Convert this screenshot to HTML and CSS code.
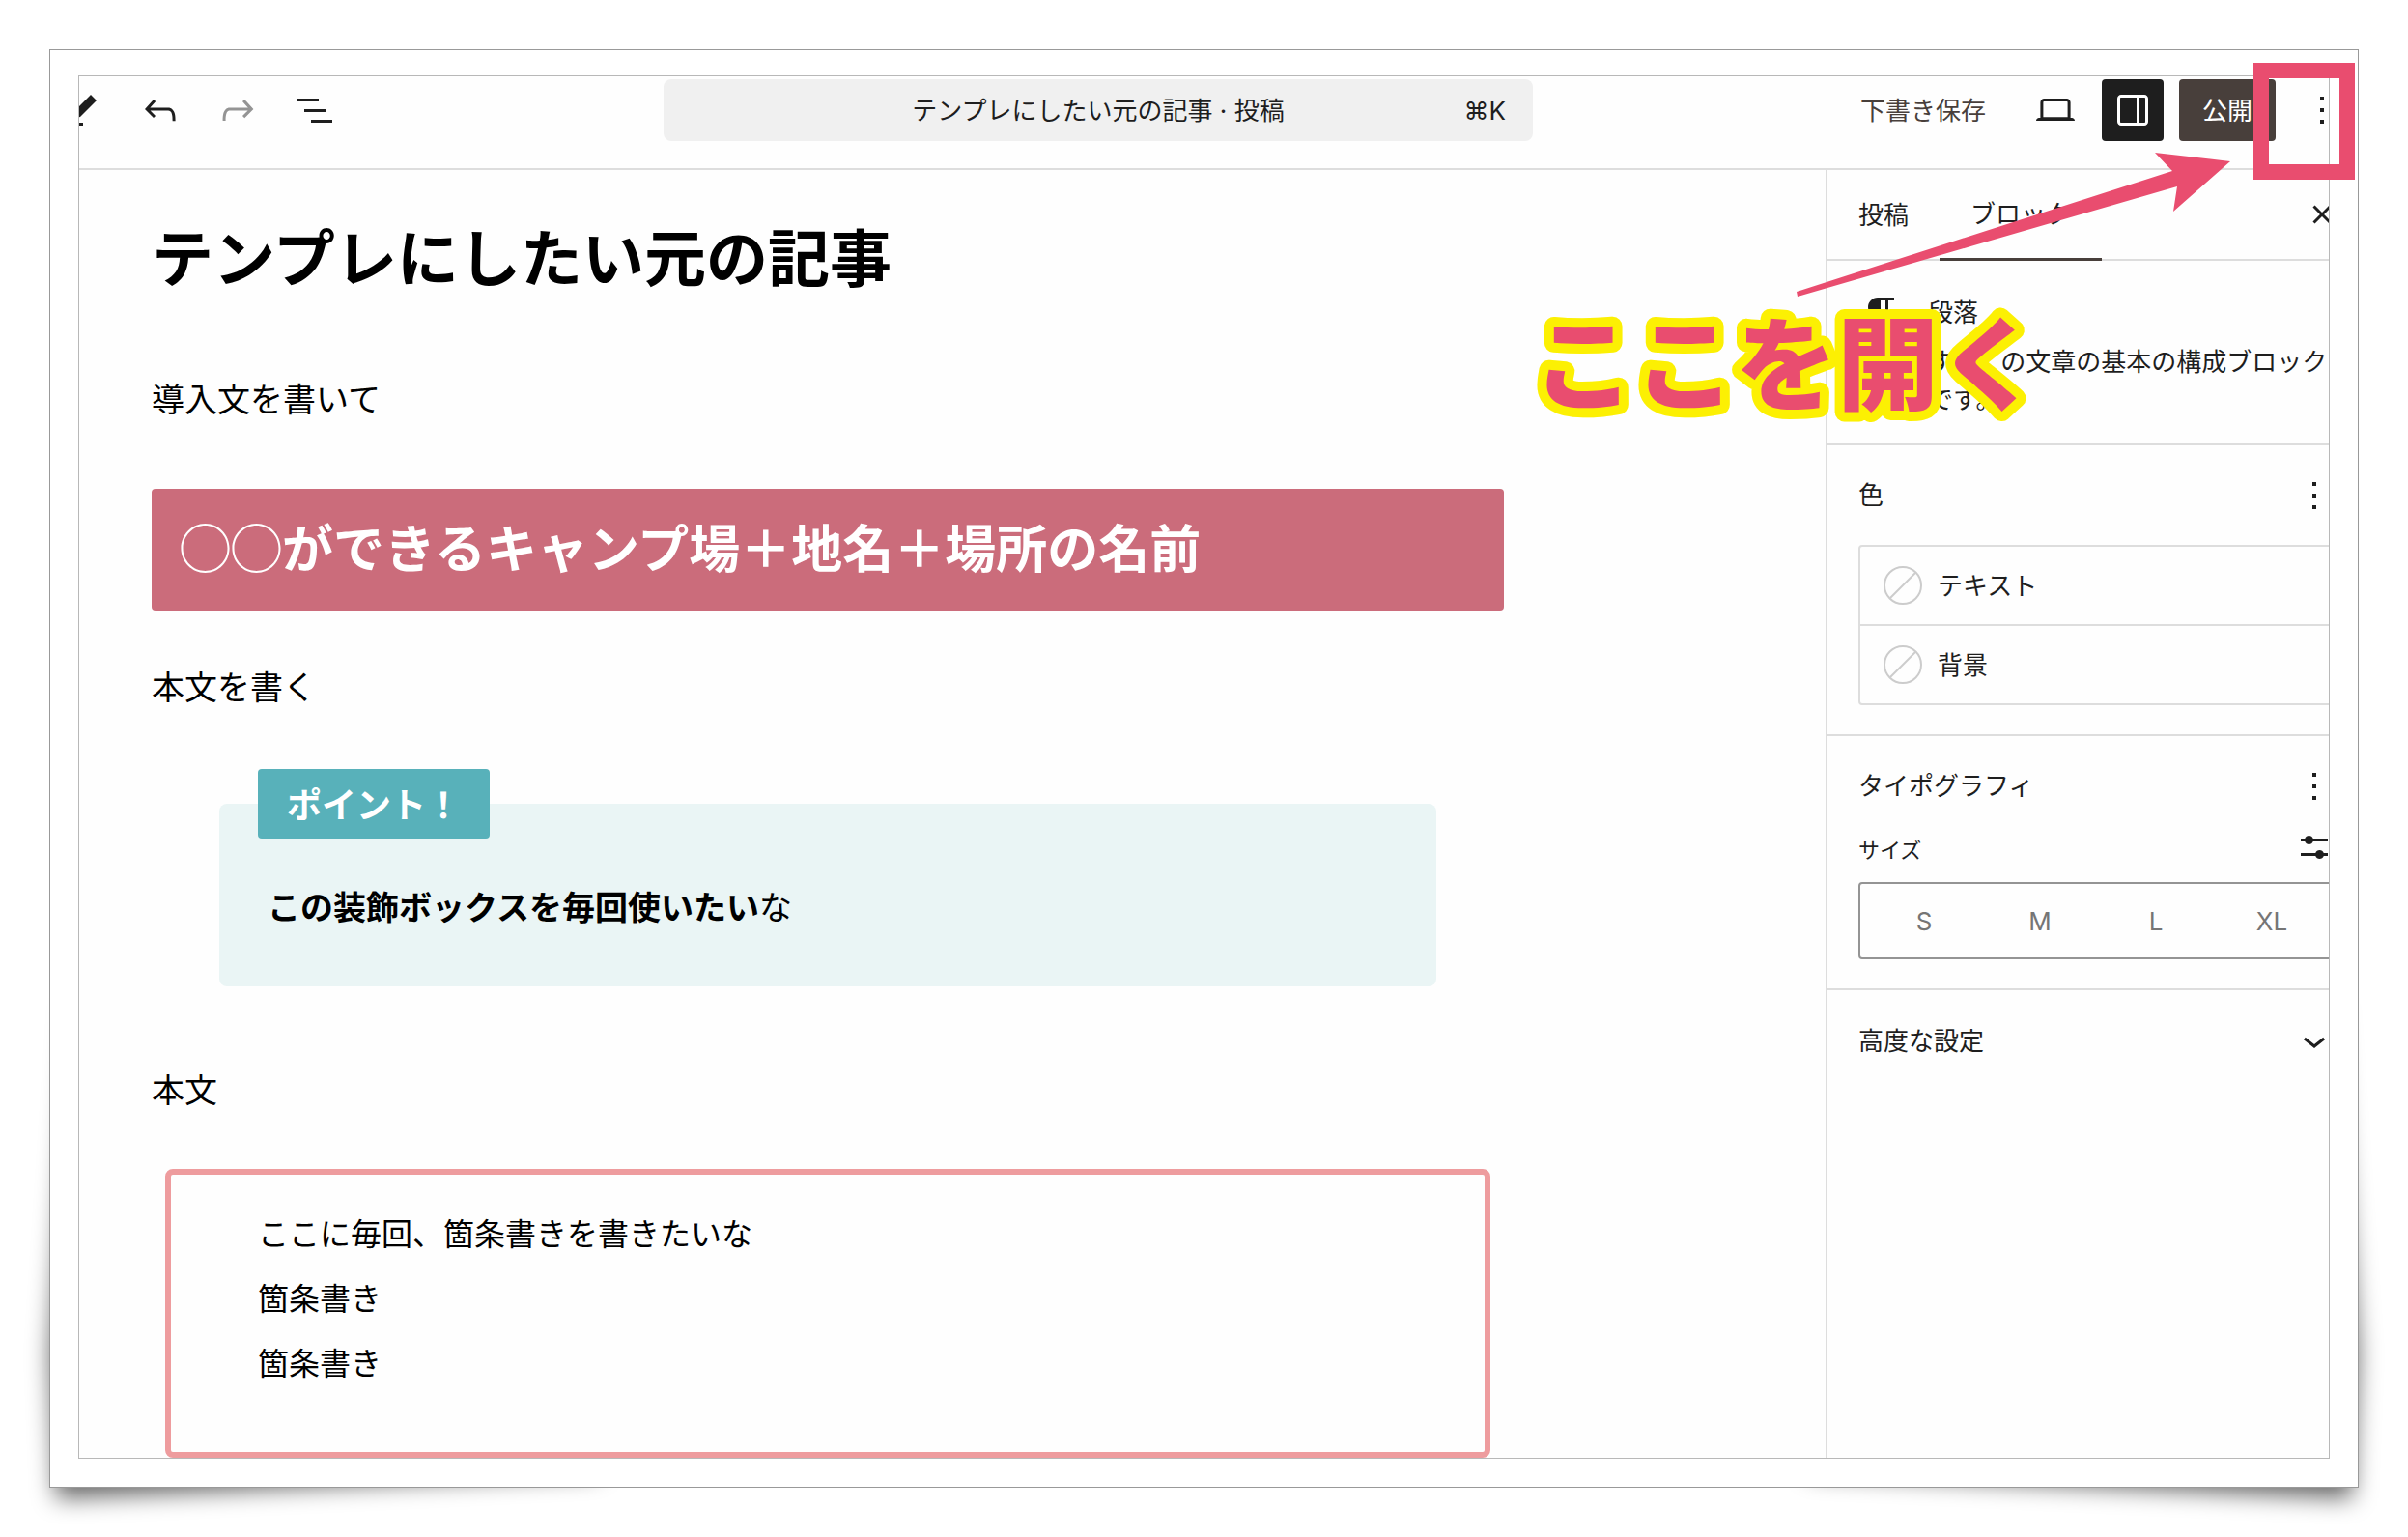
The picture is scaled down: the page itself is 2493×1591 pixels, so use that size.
FILE: index.html
```html
<!DOCTYPE html>
<html lang="ja">
<head>
<meta charset="utf-8">
<meta name="viewport" content="width=device-width, initial-scale=1">
<title>テンプレにしたい元の記事 · 投稿</title>
<link rel="stylesheet" href="styles.css">
</head>
<body>
<div class="photo">
  <svg class="lift" viewBox="0 0 700 640" aria-hidden="true"><defs><filter id="soft" x="-20%" y="-20%" width="140%" height="140%"><feGaussianBlur stdDeviation="12"/></filter></defs><path d="M76 90L52 450L58 600L620 574L620 500L90 90Z" filter="url(#soft)"/></svg>
  <svg class="lift lift-right" viewBox="0 0 700 640" aria-hidden="true"><path d="M76 90L52 450L58 600L620 574L620 500L90 90Z" filter="url(#soft)"/></svg>

  <div class="frame">
    <div class="app">
      <header class="topbar">
        <div class="tools">
          <button class="icon-button" aria-label="ツール"><svg class="icon" viewBox="0 0 24 24"><path d="m19 7-3-3-8.5 8.5-1 4 4-1L19 7Zm-7 11.5H5V20h7v-1.5Z"/></svg></button>
          <button class="icon-button" aria-label="元に戻す"><svg class="icon" viewBox="0 0 24 24"><path d="M18.3 11.7c-.6-.6-1.4-.9-2.3-.9H6.7l2.9-3.3-1.1-1-4.5 5L8.5 16l1-1-2.7-2.7H16c.5 0 .9.2 1.3.5 1 1 1 3.4 1 4.5v.3h1.5v-.2c0-1.5 0-4.3-1.5-5.7z"/></svg></button>
          <button class="icon-button is-disabled" aria-label="やり直す" disabled><svg class="icon" viewBox="0 0 24 24"><path d="M15.6 6.5l-1.1 1 2.9 3.3H8c-.9 0-1.7.3-2.3.9-1.4 1.5-1.4 4.2-1.4 5.6v.2h1.5v-.3c0-1.1 0-3.5 1-4.5.3-.3.7-.5 1.3-.5h9.2L14.5 15l1.1 1.1 4.6-4.6-4.6-5z"/></svg></button>
          <button class="icon-button" aria-label="リスト表示"><svg class="icon" viewBox="0 0 24 24"><path d="M3 6h11v1.5H3V6Zm3.5 5.5h11V13h-11v-1.5ZM21 17H10v1.5h11V17Z"/></svg></button>
        </div>
        <button class="command">
          <span class="command-title">テンプレにしたい元の記事 · 投稿</span>
          <span class="command-key">⌘K</span>
        </button>
        <div class="actions">
          <button class="save">下書き保存</button>
          <button class="icon-button" aria-label="表示"><svg class="icon" viewBox="0 0 24 24"><path d="M20.5 16h-.7V8c0-1.1-.9-2-2-2H6.2c-1.1 0-2 .9-2 2v8h-.7c-.8 0-1.5.7-1.5 1.5h20c0-.8-.7-1.5-1.5-1.5zM5.7 8c0-.3.2-.5.5-.5h11.6c.3 0 .5.2.5.5v7.6H5.7V8z"/></svg></button>
          <button class="icon-button is-pressed" aria-label="設定" aria-pressed="true"><svg class="icon" viewBox="0 0 24 24"><path d="M18 4H6c-1.1 0-2 .9-2 2v12c0 1.1.9 2 2 2h12c1.1 0 2-.9 2-2V6c0-1.1-.9-2-2-2zm-4 14.5H6c-.3 0-.5-.2-.5-.5V6c0-.3.2-.5.5-.5h8v13zm4.5-.5c0 .3-.2.5-.5.5h-2.5v-13H18c.3 0 .5.2.5.5v12z"/></svg></button>
          <button class="publish">公開</button>
          <button class="icon-button" aria-label="オプション"><svg class="icon" viewBox="0 0 24 24"><path d="M13 19h-2v-2h2v2zm0-6h-2v-2h2v2zm0-6h-2V5h2v2z"/></svg></button>
        </div>
      </header>

      <div class="workspace">
        <main class="editor">
          <h1 class="post-title">テンプレにしたい元の記事</h1>
          <p class="text lead">導入文を書いて</p>
          <h2 class="section-title">◯◯ができるキャンプ場＋地名＋場所の名前</h2>
          <p class="text body-one">本文を書く</p>
          <section class="point">
            <h3 class="point-label">ポイント！</h3>
            <p class="point-body"><strong>この装飾ボックスを毎回使いたい</strong>な</p>
          </section>
          <p class="text body-two">本文</p>
          <ul class="note">
            <li>ここに毎回、箇条書きを書きたいな</li>
            <li>箇条書き</li>
            <li>箇条書き</li>
          </ul>
        </main>

        <aside class="sidebar">
          <div class="tabs">
            <button class="tab">投稿</button>
            <button class="tab is-active">ブロック</button>
            <button class="tabs-close" aria-label="閉じる"><svg class="icon" viewBox="0 0 24 24"><path d="M12 13.06l3.712 3.713 1.061-1.06L13.061 12l3.712-3.712-1.06-1.06L12 10.938 8.288 7.227l-1.061 1.06L10.939 12l-3.712 3.712 1.06 1.061L12 13.061z"/></svg></button>
          </div>
          <section class="block-card">
            <svg class="icon" viewBox="0 0 24 24" aria-hidden="true"><path d="M10 14v6h1.500v-14.500h2.500v14.500h1.500v-14.500h3v-1.500h-8.500c-2.760 0-5 2.240-5 5s2.240 5 5 5z"/></svg>
            <div class="block-info">
              <h2 class="block-name">段落</h2>
              <p class="block-description">すべての文章の基本の構成ブロックです。</p>
            </div>
          </section>
          <section class="panel">
            <div class="panel-header">
              <h2 class="panel-title">色</h2>
              <button class="plain" aria-label="色のオプション"><svg class="icon" viewBox="0 0 24 24"><path d="M13 19h-2v-2h2v2zm0-6h-2v-2h2v2zm0-6h-2V5h2v2z"/></svg></button>
            </div>
            <div class="colors">
              <button class="color"><svg class="swatch" viewBox="0 0 40 40"><circle cx="20" cy="20" r="19"/><path d="M7 33L33 7"/></svg>テキスト</button>
              <button class="color"><svg class="swatch" viewBox="0 0 40 40"><circle cx="20" cy="20" r="19"/><path d="M7 33L33 7"/></svg>背景</button>
            </div>
          </section>
          <section class="panel">
            <div class="panel-header">
              <h2 class="panel-title">タイポグラフィ</h2>
              <button class="plain" aria-label="タイポグラフィのオプション"><svg class="icon" viewBox="0 0 24 24"><path d="M13 19h-2v-2h2v2zm0-6h-2v-2h2v2zm0-6h-2V5h2v2z"/></svg></button>
            </div>
            <div class="size-row">
              <span class="size-label" id="size-label">サイズ</span>
              <button class="plain" aria-label="カスタムサイズを設定"><svg class="icon" viewBox="0 0 24 24"><path d="m19 7.500h-7.628c-.309-.874-1.142-1.500-2.122-1.500s-1.813.626-2.122 1.500h-2.128v1.500h2.128c.309.874 1.142 1.500 2.122 1.500s1.813-.626 2.122-1.500h7.628zM19 15h-2.128c-.309-.874-1.142-1.500-2.122-1.500s-1.813.626-2.122 1.500h-7.628v1.500h7.628c.309.874 1.142 1.500 2.122 1.500s1.813-.626 2.122-1.500h2.128z"/></svg></button>
            </div>
            <div class="sizes" role="group" aria-labelledby="size-label">
              <button class="size">S</button>
              <button class="size">M</button>
              <button class="size">L</button>
              <button class="size">XL</button>
            </div>
          </section>
          <section class="panel panel-last">
            <button class="advanced">高度な設定<svg class="icon" viewBox="0 0 24 24"><path d="M17.500 11.600L12 16l-5.500-4.400.9-1.200L12 14l4.600-3.600z"/></svg></button>
          </section>
        </aside>
      </div>
    </div>

    <svg class="callout" viewBox="1580 52 861 420" role="img" aria-label="ここを開く">
      <rect x="2341" y="73" width="89" height="105" fill="none" stroke="#e94d6f" stroke-width="16"/>
      <path d="M1860 302L2249 177L2231 158L2309 167L2250 219L2254 193L1861 307Z" fill="#e94d6f"/>
      <text class="callout-text" x="1587" y="416">ここを開く</text>
    </svg>
  </div>
</div>
</body>
</html>
```
FILE: styles.css
```css
* {
  box-sizing: border-box;
}

body {
  margin: 0;
  padding: 51px;
  background: #fff;
  color: #1e1e1e;
  font-family: "Inter", "Noto Sans CJK JP", sans-serif;
  font-size: 26px;
  line-height: 39px;
}

h1, h2, h3, p, ul {
  margin: 0;
}

button {
  margin: 0;
  padding: 0;
  border: 0;
  background: none;
  color: inherit;
  font: inherit;
  white-space: nowrap;
}

/* Sheet with raised lower corners */
.photo {
  position: relative;
  z-index: 0;
}

.lift {
  position: absolute;
  z-index: -1;
  left: -51px;
  bottom: -51px;
  width: 700px;
  height: 640px;
  fill: #000;
  fill-opacity: 0.6;
}

.lift-right {
  left: auto;
  right: -51px;
  transform: scaleX(-1);
}

.frame {
  position: relative;
  padding: 26px 29px 29px;
  border: 1px solid #999;
  background: #fff;
}

.app {
  overflow: hidden;
  border: 1px solid #b8b8b8;
  background: #fefefe;
}

.icon {
  display: block;
  flex: none;
  width: 48px;
  height: 48px;
  fill: currentColor;
}

/* Top bar */
.topbar {
  display: flex;
  justify-content: space-between;
  margin: 0 -25px 0 -28px;
  padding: 3px 0 28px;
  border-bottom: 2px solid #ddd;
}

.tools,
.actions {
  display: flex;
  gap: 16px;
}

.tools {
  padding-right: 14px;
}

.icon-button {
  display: grid;
  place-items: center;
  width: 64px;
  height: 64px;
  border-radius: 4px;
}

.is-disabled {
  color: #949494;
}

.is-pressed {
  background: #1e1e1e;
  color: #fff;
}

.command {
  display: grid;
  grid-template-columns: 1fr auto 1fr;
  align-items: center;
  width: 900px;
  height: 64px;
  padding: 0 28px;
  border-radius: 8px;
  background: #f0f0f0;
}

.command-title {
  grid-column: 2;
}

.command-key {
  justify-self: end;
}

.save {
  padding: 0 24px;
  color: #483f3b;
}

.publish {
  padding: 0 24px;
  border-radius: 4px;
  background: #483f3b;
  color: #fff;
}

.workspace {
  display: grid;
  grid-template-columns: minmax(0, 1fr) 562px;
  margin-right: -41px;
}

/* Post content */
.editor {
  padding: 39px 75px 0;
  color: #000;
  font-family: "Noto Sans CJK JP", sans-serif;
}

.editor > * {
  max-width: 1400px;
}

.post-title {
  font-size: 64px;
  line-height: 96px;
}

.text,
.point-body {
  font-size: 34px;
  line-height: 60px;
}

.lead {
  margin-top: 71px;
}

.section-title {
  margin-top: 64px;
  padding: 19px 29px 27px;
  border-radius: 4px;
  background: #cb6c7b;
  color: #fff;
  font-size: 53px;
  line-height: 80px;
}

.body-one {
  margin-top: 48px;
}

.point {
  margin: 56px 0 76px;
  padding: 0 70px;
}

.point-label {
  position: relative;
  width: fit-content;
  height: 72px;
  margin: 0 0 -36px 40px;
  padding: 0 30px;
  border-radius: 4px;
  background: #58b1ba;
  color: #fff;
  font-size: 36px;
  line-height: 70px;
}

.point-body {
  padding: 76px 50px 53px;
  border-radius: 8px;
  background: #eaf5f5;
}

.editor > .note {
  max-width: 1372px;
  margin: 53px 14px 0;
  padding: 26px 90px 60px;
  border: 6px solid #ee9c9e;
  border-radius: 8px;
  font-size: 32px;
  line-height: 67px;
  list-style: none;
}

/* Settings sidebar */
.sidebar {
  border-left: 2px solid #ddd;
}

.tabs {
  display: flex;
  height: 94px;
  border-bottom: 2px solid #ddd;
}

.tab {
  padding: 0 32px;
}

.is-active {
  margin-bottom: -2px;
  border-bottom: 3px solid #483f3b;
}

.tabs-close {
  margin-left: auto;
  margin-right: 24px;
}

.block-card {
  display: flex;
  gap: 24px;
  padding: 30px 32px 26px;
  border-bottom: 2px solid #ddd;
}

.block-name,
.panel-title {
  font-size: 26px;
  font-weight: 400;
  line-height: 48px;
}

.block-description {
  padding-top: 7px;
}

.panel {
  padding: 28px 32px 30px;
  border-bottom: 2px solid #ddd;
}

.panel-last {
  border-bottom: 0;
}

.panel-header,
.size-row,
.advanced {
  display: flex;
  align-items: center;
  justify-content: space-between;
}

.colors {
  margin-top: 27px;
  border: 2px solid #ddd;
  border-radius: 4px;
}

.color {
  display: flex;
  align-items: center;
  gap: 16px;
  width: 100%;
  height: 80px;
  padding: 0 24px;
}

.color + .color {
  height: 82px;
  border-top: 2px solid #ddd;
}

.swatch {
  width: 40px;
  height: 40px;
  fill: none;
  stroke: #ccc;
  stroke-width: 2px;
}

.size-row {
  margin-top: 15px;
}

.size-label {
  padding-top: 6px;
  font-size: 22px;
}

.sizes {
  display: grid;
  grid-template-columns: repeat(4, 1fr);
  height: 80px;
  margin-top: 12px;
  padding: 0 6px;
  border: 2px solid #949494;
  border-radius: 4px;
  color: #757575;
}

.advanced {
  width: 100%;
}

/* Callout drawn over the screen */
.callout {
  position: absolute;
  top: 0;
  right: 0;
  width: 861px;
  height: 420px;
  pointer-events: none;
}

.callout-text {
  fill: #e94d6f;
  stroke: #fcf003;
  stroke-width: 20px;
  stroke-linejoin: round;
  paint-order: stroke;
  font-family: "Noto Sans CJK JP", sans-serif;
  font-size: 105px;
  font-weight: 900;
}
```
